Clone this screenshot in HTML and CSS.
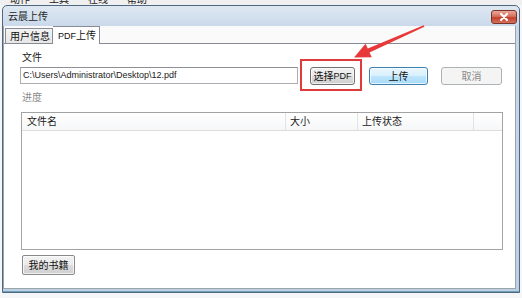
FILE: index.html
```html
<!DOCTYPE html>
<html>
<head>
<meta charset="utf-8">
<link rel="stylesheet" href="styles.css">
</head>
<body>
<div class="screen">
  <div class="menubar"><span>动作(A)</span><span>工具(T)</span><span>在线(O)</span><span>帮助(H)</span></div>
  <div class="window">
    <div class="titlebar">
      <span class="title">云晨上传</span>
      <div class="close"><svg width="10" height="8" viewBox="0 0 10 8"><path d="M2 1 L8 7 M8 1 L2 7" stroke="#fff" stroke-width="2" stroke-linecap="round"/></svg></div>
    </div>
    <div class="client">
      <div class="tabs">
        <div class="tab">用户信息</div>
        <div class="tab active"><span class="lat">PDF</span>上传</div>
      </div>
      <div class="panel">
        <div class="label">文件</div>
        <div class="filerow">
          <div class="input">C:\Users\Administrator\Desktop\12.pdf</div>
          <div class="btn pick">选择<span class="lat">PDF</span></div>
          <div class="btn primary">上传</div>
          <div class="btn disabled">取消</div>
        </div>
        <div class="label muted">进度</div>
        <div class="list">
          <div class="list-head">
            <div class="col c1">文件名</div>
            <div class="col c2">大小</div>
            <div class="col c3">上传状态</div>
            <div class="col c4"></div>
          </div>
        </div>
        <div class="btn books">我的书籍</div>
      </div>
    </div>
  </div>
  <div class="highlight"></div>
  <svg class="arrow" width="522" height="298" viewBox="0 0 522 298">
    <polygon points="354,57.5 365.5,43.8 367.8,48.5 423.7,25.3 424.4,26.7 369.5,52.5 371.8,57.2" fill="#e8393a"/>
  </svg>
</div>
</body>
</html>
```

FILE: styles.css
```css
* { box-sizing: border-box; }
html, body { margin: 0; padding: 0; }
body {
  width: 522px;
  height: 298px;
  overflow: hidden;
  font-family: "Noto Sans CJK SC", "Liberation Sans", sans-serif;
  font-size: 10px;
  color: #1a1a1a;
}
.lat { font-family: "Liberation Sans", "Noto Sans CJK SC", sans-serif; font-size: 9px; }
.screen {
  position: relative;
  width: 522px;
  height: 298px;
  background: #f4f6f8;
}
.menubar {
  height: 5px;
  overflow: hidden;
  display: flex;
  gap: 7px;
  padding-left: 10px;
  background: #f0f0f0;
}
.menubar span {
  display: block;
  line-height: 12px;
  margin-top: -7px;
  font-size: 10px;
  color: #222;
  width: 32px;
}
.window {
  margin-left: 2px;
  width: 518px;
  height: 288px;
  border: 1px solid #50687f;
  border-radius: 5px 5px 0 0;
  background: linear-gradient(to bottom, #dfe8f2 0px, #c9d9ea 20px, #bcd0e4 100%);
  padding: 0 3px 3px 0;
  display: flex;
  flex-direction: column;
  box-shadow: inset 0 -1px 0 #6fa0b8;
}
.titlebar {
  height: 20px;
  display: flex;
  align-items: flex-start;
  justify-content: space-between;
  padding-left: 5px;
}
.title {
  line-height: 12px;
  margin-top: 4px;
  color: #1e1e1e;
}
.close {
  width: 26px;
  height: 14px;
  margin-top: 4px;
  margin-right: -1px;
  border: 1px solid #7a3328;
  border-radius: 3px;
  background: linear-gradient(to bottom, #e9a99c 0%, #d6705e 45%, #c2412c 55%, #d4705f 100%);
  display: flex;
  align-items: center;
  justify-content: center;
}
.close svg { display: block; }
.client {
  flex: 1;
  display: flex;
  flex-direction: column;
  background: #fafafa;
  border: 1px solid #9ba3ab;
  border-top: none;
}
.tabs {
  height: 17px;
  display: flex;
  align-items: flex-end;
  padding-left: 1px;
  position: relative;
  z-index: 1;
}
.tab {
  width: 48px;
  height: 15px;
  border: 1px solid #898c95;
  border-bottom: none;
  background: linear-gradient(to bottom, #f3f3f3, #e6e6e6);
  line-height: 13px;
  padding-left: 4px;
  color: #111;
}
.tab.active {
  width: 47px;
  height: 18px;
  margin-bottom: -1px;
  border-left: none;
  background: #fff;
  padding-left: 5px;
  line-height: 16px;
}
.panel {
  flex: 1;
  background: #fff;
  border-top: 1px solid #898c95;
  padding: 7px 0 0 16px;
}
.label {
  line-height: 12px;
  margin-left: 2px;
  color: #1a1a1a;
}
.label.muted {
  color: #8c8c8c;
  margin-top: 6px;
}
.filerow {
  display: flex;
  margin-top: 4px;
  height: 18px;
  align-items: flex-start;
}
.input {
  width: 278px;
  height: 17px;
  border: 1px solid #abadb3;
  border-top-color: #8e9096;
  font-family: "Liberation Sans", sans-serif;
  font-size: 9px;
  line-height: 15px;
  padding-left: 2px;
  color: #222;
  white-space: nowrap;
}
.btn {
  height: 18px;
  border: 1px solid #707070;
  border-radius: 3px;
  background: linear-gradient(to bottom, #f2f2f2 0%, #ebebeb 48%, #dddddd 52%, #cfcfcf 100%);
  box-shadow: inset 0 0 0 1px rgba(255,255,255,0.7);
  display: flex;
  align-items: center;
  justify-content: center;
  line-height: 12px;
  color: #111;
}
.btn.pick { width: 45px; margin-left: 12px; }
.btn.primary {
  width: 59px;
  margin-left: 14px;
  border-color: #3c7fb1;
  background: linear-gradient(to bottom, #eaf6fd 0%, #d9f0fc 48%, #bee6fd 52%, #a7d9f5 100%);
}
.btn.disabled {
  width: 61px;
  margin-left: 13px;
  border-color: #adb2b5;
  background: #f4f4f4;
  box-shadow: none;
  color: #8a8a8a;
}
.list {
  margin-top: 9px;
  margin-left: 1px;
  width: 482px;
  height: 138px;
  border: 1px solid #a3a3a3;
  background: #fff;
}
.list-head {
  display: flex;
  height: 18px;
  border-bottom: 1px solid #dcdcdc;
  background: linear-gradient(to bottom, #ffffff, #f6f7f8);
}
.col {
  height: 17px;
  line-height: 16px;
  border-right: 1px solid #e2e3e5;
  padding-left: 4px;
  color: #1a1a1a;
}
.c1 { width: 264px; padding-left: 5px; }
.c2 { width: 72px; }
.c3 { width: 116px; }
.c4 { width: 28px; border-right: none; }
.btn.books {
  width: 53px;
  height: 20px;
  margin-top: 5px;
  margin-left: 2px;
  border-color: #8a8a8a;
  border-radius: 2px;
}
.highlight {
  position: absolute;
  left: 300px;
  top: 59px;
  width: 62px;
  height: 32px;
  border: 2px solid #e03b3b;
}
.arrow {
  position: absolute;
  left: 0;
  top: 0;
  pointer-events: none;
}
```
